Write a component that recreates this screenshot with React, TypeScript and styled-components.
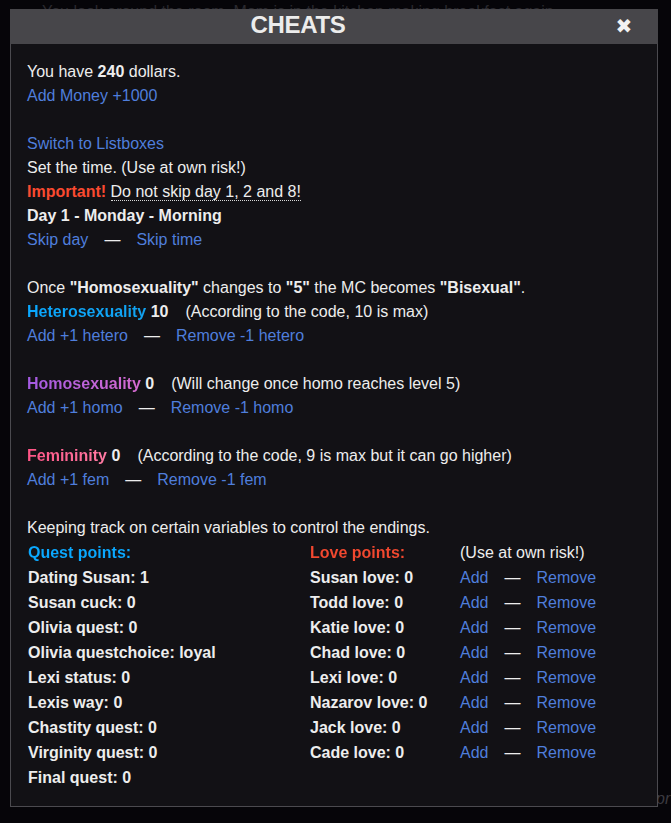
import React from "react";
import styled, { createGlobalStyle } from "styled-components";

type Love = { name: string; value: number };

const questPoints: string[] = [
  "Dating Susan: 1",
  "Susan cuck: 0",
  "Olivia quest: 0",
  "Olivia questchoice: loyal",
  "Lexi status: 0",
  "Lexis way: 0",
  "Chastity quest: 0",
  "Virginity quest: 0",
  "Final quest: 0",
];

const lovePoints: Love[] = [
  { name: "Susan", value: 0 },
  { name: "Todd", value: 0 },
  { name: "Katie", value: 0 },
  { name: "Chad", value: 0 },
  { name: "Lexi", value: 0 },
  { name: "Nazarov", value: 0 },
  { name: "Jack", value: 0 },
  { name: "Cade", value: 0 },
];

const ActionPair = ({ left, right }: { left: string; right: string }) => (
  <Line>
    <Link>{left}</Link>
    <Separator>—</Separator>
    <Link>{right}</Link>
  </Line>
);

const App = () => {
  return (
    <>
      <GlobalStyle />
      <Page>
        <StoryLine>
          You look around the room. Mom is in the kitchen making breakfast again.
        </StoryLine>
        <StoryTail>pr</StoryTail>

        <Modal>
          <Header>
            <Title>CHEATS</Title>
            <CloseButton>✖</CloseButton>
          </Header>

          <Body>
            <Section>
              <Line>
                You have <b>240</b> dollars.
              </Line>
              <Line>
                <Link>Add Money +1000</Link>
              </Line>
            </Section>

            <Section>
              <Line>
                <Link>Switch to Listboxes</Link>
              </Line>
              <Line>Set the time. (Use at own risk!)</Line>
              <Line>
                <Important>Important!</Important> <Dotted>Do not skip day 1, 2 and 8!</Dotted>
              </Line>
              <Line>
                <b>Day 1 - Monday - Morning</b>
              </Line>
              <ActionPair left="Skip day" right="Skip time" />
            </Section>

            <Section>
              <Line>
                Once <b>"Homosexuality"</b> changes to <b>"5"</b> the MC becomes{" "}
                <b>"Bisexual"</b>.
              </Line>
              <Line>
                <Stat $tone="hetero">Heterosexuality</Stat> <b>10</b>
                <Note>(According to the code, 10 is max)</Note>
              </Line>
              <ActionPair left="Add +1 hetero" right="Remove -1 hetero" />
            </Section>

            <Section>
              <Line>
                <Stat $tone="homo">Homosexuality</Stat> <b>0</b>
                <Note>(Will change once homo reaches level 5)</Note>
              </Line>
              <ActionPair left="Add +1 homo" right="Remove -1 homo" />
            </Section>

            <Section>
              <Line>
                <Stat $tone="fem">Femininity</Stat> <b>0</b>
                <Note>(According to the code, 9 is max but it can go higher)</Note>
              </Line>
              <ActionPair left="Add +1 fem" right="Remove -1 fem" />
            </Section>

            <Line>Keeping track on certain variables to control the endings.</Line>
            <TrackGrid>
              <Cell>
                <Stat $tone="quest">Quest points:</Stat>
              </Cell>
              <Cell>
                <Stat $tone="love">Love points:</Stat>
              </Cell>
              <Cell>(Use at own risk!)</Cell>
              {questPoints.map((q, i) => {
                const love = lovePoints[i];
                return (
                  <React.Fragment key={q}>
                    <Cell $bold>{q}</Cell>
                    <Cell $bold>{love ? `${love.name} love: ${love.value}` : ""}</Cell>
                    <Cell>
                      {love && (
                        <>
                          <Link>Add</Link>
                          <Separator>—</Separator>
                          <Link>Remove</Link>
                        </>
                      )}
                    </Cell>
                  </React.Fragment>
                );
              })}
            </TrackGrid>
          </Body>
        </Modal>
      </Page>
    </>
  );
};

export default App;

const GlobalStyle = createGlobalStyle`
  html, body {
    margin: 0;
    padding: 0;
    background: #060509;
  }
  body {
    font-family: "Liberation Sans", Arial, sans-serif;
  }
`;

const Page = styled.div`
  position: relative;
  width: 671px;
  height: 823px;
  overflow: hidden;
  background: #060509;
  display: flex;
  flex-direction: column;
  justify-content: space-between;
`;

const StoryLine = styled.p`
  margin: 2px 0 0;
  padding-left: 42px;
  font-size: 16px;
  line-height: 20px;
  color: #29282e;
  white-space: nowrap;
`;

const StoryTail = styled.p`
  margin: 0 0 14px;
  padding-left: 656px;
  font-size: 16px;
  font-style: italic;
  line-height: 20px;
  color: #3b3a40;
  white-space: nowrap;
`;

const Modal = styled.div`
  position: absolute;
  top: 9px;
  left: 10px;
  width: 648px;
  height: 798px;
  box-sizing: border-box;
  border: 1px solid #4b4a4f;
  border-top: none;
  background: #121115;
  display: flex;
  flex-direction: column;
`;

const Header = styled.div`
  display: flex;
  align-items: center;
  height: 35px;
  margin: 0 -1px;
  background: #47464a;
`;

const Title = styled.div`
  flex: 1;
  text-align: center;
  font-size: 24px;
  font-weight: bold;
  color: #ececec;
  letter-spacing: -0.3px;
  padding-bottom: 3px;
`;

const CloseButton = styled.div`
  width: 72px;
  text-align: center;
  font-family: "DejaVu Sans", sans-serif;
  font-size: 20px;
  color: #f2f2f2;
  padding-left: 4px;
  padding-bottom: 2px;
  box-sizing: border-box;
`;

const Body = styled.div`
  padding: 16px 16px 16px;
  font-size: 16px;
  line-height: 24px;
  color: #ededed;
`;

const Section = styled.div`
  margin-bottom: 24px;
`;

const Line = styled.div`
  white-space: nowrap;
`;

const Link = styled.span`
  color: #4f7edc;
  cursor: pointer;
`;

const Separator = styled.span`
  display: inline-block;
  margin: 0 16px;
  color: #ededed;
`;

const Important = styled.b`
  color: #fa4a30;
`;

const Dotted = styled.span`
  border-bottom: 1px dotted #d8d8d8;
`;

const tones: Record<string, string> = {
  hetero: "linear-gradient(90deg, #0aa8ff, #12a2f0)",
  homo: "linear-gradient(90deg, #a35ae2, #d66bd0)",
  fem: "linear-gradient(90deg, #ff5485, #ff7aa3)",
  quest: "linear-gradient(90deg, #0aa8ff, #0aa8ff)",
  love: "linear-gradient(90deg, #f2482f, #f2482f)",
};

const Stat = styled.b<{ $tone: string }>`
  background: ${(p) => tones[p.$tone]};
  -webkit-background-clip: text;
  background-clip: text;
  color: transparent;
`;

const Note = styled.span`
  margin-left: 17px;
`;

const TrackGrid = styled.div`
  display: grid;
  grid-template-columns: 282px 150px auto;
  grid-auto-rows: 25px;
  align-items: center;
  padding-left: 1px;
`;

const Cell = styled.div<{ $bold?: boolean }>`
  white-space: nowrap;
  font-weight: ${(p) => (p.$bold ? "bold" : "normal")};
`;
